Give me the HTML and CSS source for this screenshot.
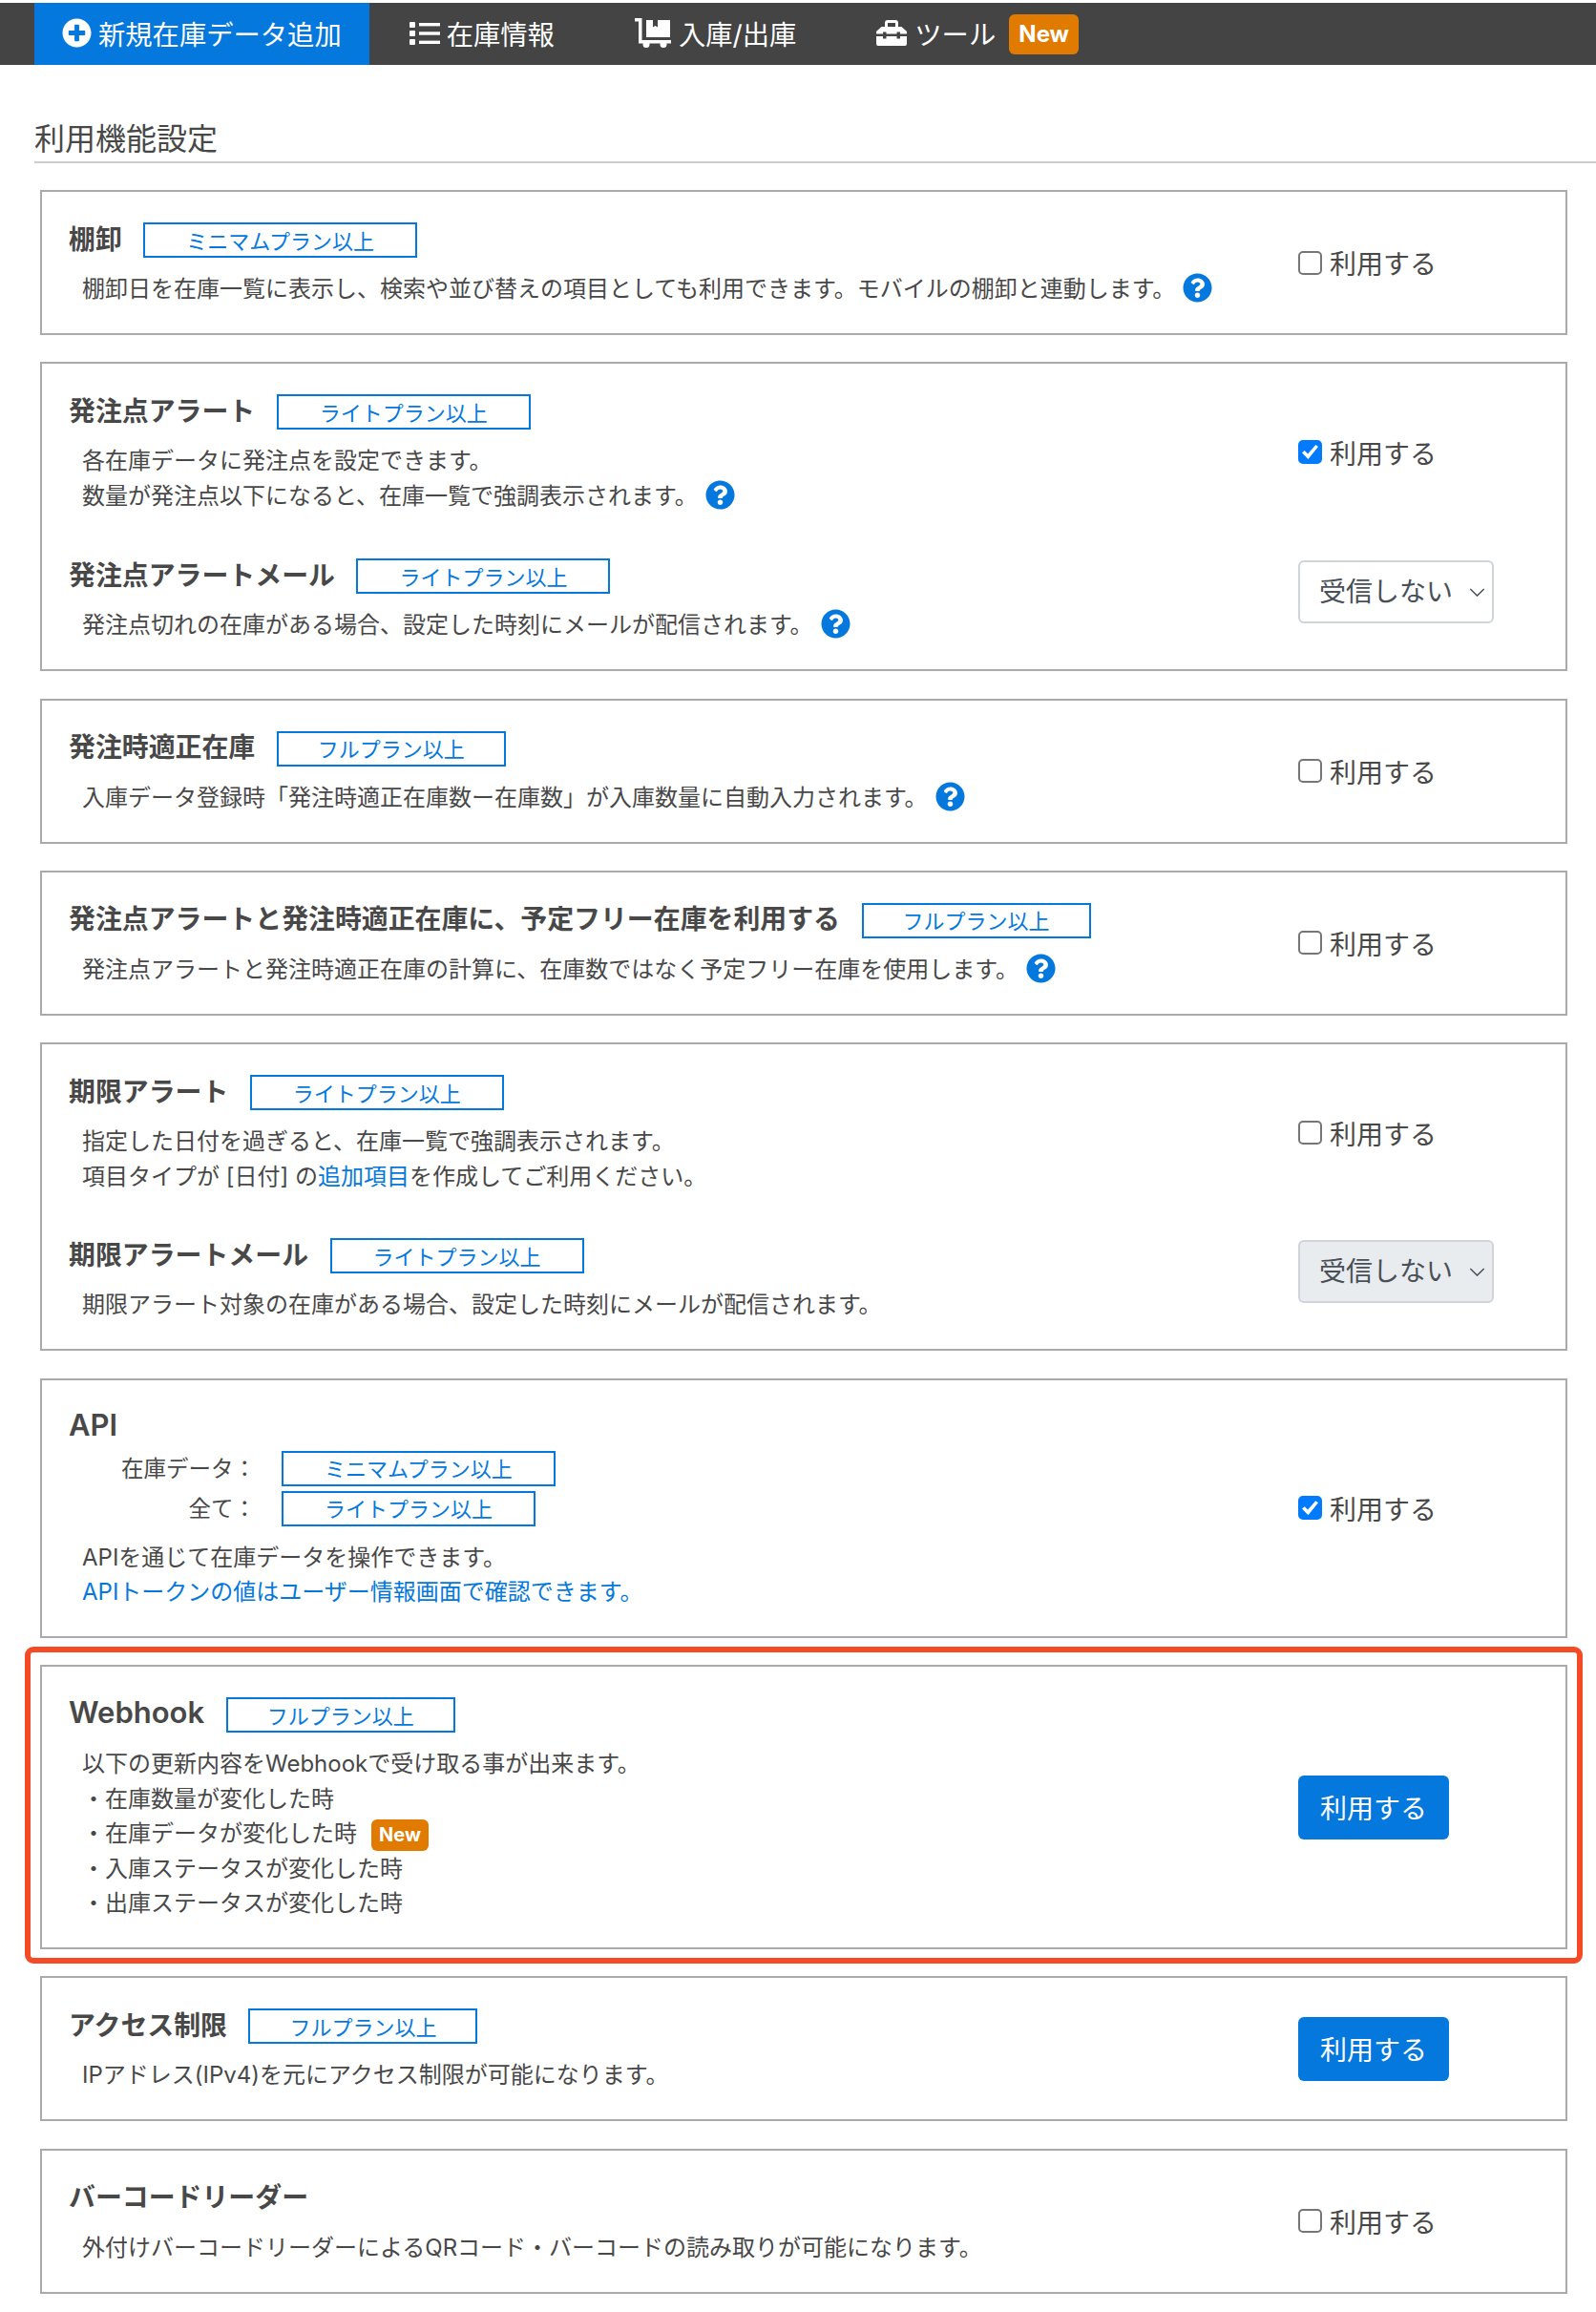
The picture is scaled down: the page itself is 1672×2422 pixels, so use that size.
FILE: index.html
```html
<!DOCTYPE html>
<html lang="ja">
<head>
<meta charset="utf-8">
<title>利用機能設定</title>
<link rel="stylesheet" href="styles.css">
</head>
<body>
<nav class="nav">
  <a class="tab tab--active">
    <svg class="ico ico--plus" viewBox="0 0 512 512"><path d="M256 8C119 8 8 119 8 256s111 248 248 248 248-111 248-248S393 8 256 8zm144 276c0 6.600-5.400 12-12 12h-92v92c0 6.600-5.400 12-12 12h-56c-6.600 0-12-5.400-12-12v-92h-92c-6.600 0-12-5.400-12-12v-56c0-6.600 5.400-12 12-12h92v-92c0-6.600 5.400-12 12-12h56c6.600 0 12 5.400 12 12v92h92c6.600 0 12 5.400 12 12v56z"/></svg>
    新規在庫データ追加
  </a>
  <a class="tab">
    <svg class="ico ico--list" viewBox="0 0 32 24"><rect x="0" y="0" width="6" height="6" rx="1"/><rect x="0" y="9" width="6" height="6" rx="1"/><rect x="0" y="18" width="6" height="6" rx="1"/><rect x="10" y="1" width="22" height="3.400"/><rect x="10" y="10.300" width="22" height="3.400"/><rect x="10" y="19.600" width="22" height="3.400"/></svg>
    在庫情報
  </a>
  <a class="tab">
    <svg class="ico ico--dolly" viewBox="0 0 38 31"><path d="M0 0h7.500v23h30.500v3.500H4V3.500H0z"/><path d="M12 2h7v7.500l2.500-1.500 2.500 1.500V2h13v18H12z"/><circle cx="12" cy="27.500" r="3.500"/><circle cx="30" cy="27.500" r="3.500"/></svg>
    入庫/出庫
  </a>
  <a class="tab">
    <svg class="ico ico--toolbox" viewBox="0 0 32 27"><path d="M9 7V3a3 3 0 0 1 3-3h8a3 3 0 0 1 3 3v4h3.500L32 12v2.500H25v-2h-3.500v2h-11v-2H7v2H0V12l5.500-5zM12 3v4h8V3z" fill-rule="evenodd"/><path d="M0 17h7v2.500h3.500V17h11v2.500H25V17h7v8a2 2 0 0 1-2 2H2a2 2 0 0 1-2-2z"/></svg>
    ツール
    <span class="new new--nav">New</span>
  </a>
</nav>

<main class="page">
  <h1 class="title">利用機能設定</h1>

  <section class="card">
    <div class="row">
      <div class="info">
        <div class="head"><h2 class="name">棚卸</h2><span class="plan">ミニマムプラン以上</span></div>
        <p class="desc">棚卸日を在庫一覧に表示し、検索や並び替えの項目としても利用できます。モバイルの棚卸と連動します。<svg class="help" viewBox="0 0 512 512"><path d="M504 256c0 136.997-111.043 248-248 248S8 392.997 8 256C8 119.083 119.043 8 256 8s248 111.083 248 248zM262.655 90c-54.497 0-89.255 22.957-116.549 63.758-3.536 5.286-2.353 12.415 2.715 16.258l34.699 26.310c5.205 3.947 12.621 3.008 16.665-2.122 17.864-22.658 30.113-35.797 57.303-35.797 20.429 0 45.698 13.148 45.698 32.958 0 14.976-12.363 22.667-32.534 33.976C247.128 238.528 216 254.941 216 296v4c0 6.627 5.373 12 12 12h56c6.627 0 12-5.373 12-12v-1.333c0-28.462 83.186-29.647 83.186-106.667 0-58.002-60.165-102-116.531-102zM256 338c-25.365 0-46 20.635-46 46 0 25.364 20.635 46 46 46s46-20.636 46-46c0-25.365-20.635-46-46-46z"/></svg></p>
      </div>
      <div class="side"><label class="use"><input class="box" type="checkbox">利用する</label></div>
    </div>
  </section>

  <section class="card">
    <div class="row">
      <div class="info">
        <div class="head"><h2 class="name">発注点アラート</h2><span class="plan">ライトプラン以上</span></div>
        <p class="desc">各在庫データに発注点を設定できます。<br>数量が発注点以下になると、在庫一覧で強調表示されます。<svg class="help" viewBox="0 0 512 512"><path d="M504 256c0 136.997-111.043 248-248 248S8 392.997 8 256C8 119.083 119.043 8 256 8s248 111.083 248 248zM262.655 90c-54.497 0-89.255 22.957-116.549 63.758-3.536 5.286-2.353 12.415 2.715 16.258l34.699 26.310c5.205 3.947 12.621 3.008 16.665-2.122 17.864-22.658 30.113-35.797 57.303-35.797 20.429 0 45.698 13.148 45.698 32.958 0 14.976-12.363 22.667-32.534 33.976C247.128 238.528 216 254.941 216 296v4c0 6.627 5.373 12 12 12h56c6.627 0 12-5.373 12-12v-1.333c0-28.462 83.186-29.647 83.186-106.667 0-58.002-60.165-102-116.531-102zM256 338c-25.365 0-46 20.635-46 46 0 25.364 20.635 46 46 46s46-20.636 46-46c0-25.365-20.635-46-46-46z"/></svg></p>
      </div>
      <div class="side"><label class="use"><input class="box" type="checkbox" checked>利用する</label></div>
    </div>
    <div class="row row--sub">
      <div class="info">
        <div class="head"><h2 class="name">発注点アラートメール</h2><span class="plan">ライトプラン以上</span></div>
        <p class="desc">発注点切れの在庫がある場合、設定した時刻にメールが配信されます。<svg class="help" viewBox="0 0 512 512"><path d="M504 256c0 136.997-111.043 248-248 248S8 392.997 8 256C8 119.083 119.043 8 256 8s248 111.083 248 248zM262.655 90c-54.497 0-89.255 22.957-116.549 63.758-3.536 5.286-2.353 12.415 2.715 16.258l34.699 26.310c5.205 3.947 12.621 3.008 16.665-2.122 17.864-22.658 30.113-35.797 57.303-35.797 20.429 0 45.698 13.148 45.698 32.958 0 14.976-12.363 22.667-32.534 33.976C247.128 238.528 216 254.941 216 296v4c0 6.627 5.373 12 12 12h56c6.627 0 12-5.373 12-12v-1.333c0-28.462 83.186-29.647 83.186-106.667 0-58.002-60.165-102-116.531-102zM256 338c-25.365 0-46 20.635-46 46 0 25.364 20.635 46 46 46s46-20.636 46-46c0-25.365-20.635-46-46-46z"/></svg></p>
      </div>
      <div class="side side--select">
        <div class="pick"><select class="select"><option>受信しない</option></select><svg class="chev" viewBox="0 0 18 10"><path d="M1 1l8 8 8-8"/></svg></div>
      </div>
    </div>
  </section>

  <section class="card">
    <div class="row">
      <div class="info">
        <div class="head"><h2 class="name">発注時適正在庫</h2><span class="plan plan--full">フルプラン以上</span></div>
        <p class="desc">入庫データ登録時「発注時適正在庫数ー在庫数」が入庫数量に自動入力されます。<svg class="help" viewBox="0 0 512 512"><path d="M504 256c0 136.997-111.043 248-248 248S8 392.997 8 256C8 119.083 119.043 8 256 8s248 111.083 248 248zM262.655 90c-54.497 0-89.255 22.957-116.549 63.758-3.536 5.286-2.353 12.415 2.715 16.258l34.699 26.310c5.205 3.947 12.621 3.008 16.665-2.122 17.864-22.658 30.113-35.797 57.303-35.797 20.429 0 45.698 13.148 45.698 32.958 0 14.976-12.363 22.667-32.534 33.976C247.128 238.528 216 254.941 216 296v4c0 6.627 5.373 12 12 12h56c6.627 0 12-5.373 12-12v-1.333c0-28.462 83.186-29.647 83.186-106.667 0-58.002-60.165-102-116.531-102zM256 338c-25.365 0-46 20.635-46 46 0 25.364 20.635 46 46 46s46-20.636 46-46c0-25.365-20.635-46-46-46z"/></svg></p>
      </div>
      <div class="side"><label class="use"><input class="box" type="checkbox">利用する</label></div>
    </div>
  </section>

  <section class="card">
    <div class="row">
      <div class="info">
        <div class="head"><h2 class="name">発注点アラートと発注時適正在庫に、予定フリー在庫を利用する</h2><span class="plan plan--full">フルプラン以上</span></div>
        <p class="desc">発注点アラートと発注時適正在庫の計算に、在庫数ではなく予定フリー在庫を使用します。<svg class="help" viewBox="0 0 512 512"><path d="M504 256c0 136.997-111.043 248-248 248S8 392.997 8 256C8 119.083 119.043 8 256 8s248 111.083 248 248zM262.655 90c-54.497 0-89.255 22.957-116.549 63.758-3.536 5.286-2.353 12.415 2.715 16.258l34.699 26.310c5.205 3.947 12.621 3.008 16.665-2.122 17.864-22.658 30.113-35.797 57.303-35.797 20.429 0 45.698 13.148 45.698 32.958 0 14.976-12.363 22.667-32.534 33.976C247.128 238.528 216 254.941 216 296v4c0 6.627 5.373 12 12 12h56c6.627 0 12-5.373 12-12v-1.333c0-28.462 83.186-29.647 83.186-106.667 0-58.002-60.165-102-116.531-102zM256 338c-25.365 0-46 20.635-46 46 0 25.364 20.635 46 46 46s46-20.636 46-46c0-25.365-20.635-46-46-46z"/></svg></p>
      </div>
      <div class="side"><label class="use"><input class="box" type="checkbox">利用する</label></div>
    </div>
  </section>

  <section class="card">
    <div class="row">
      <div class="info">
        <div class="head"><h2 class="name">期限アラート</h2><span class="plan">ライトプラン以上</span></div>
        <p class="desc">指定した日付を過ぎると、在庫一覧で強調表示されます。<br>項目タイプが [日付] の<a class="link">追加項目</a>を作成してご利用ください。</p>
      </div>
      <div class="side"><label class="use"><input class="box" type="checkbox">利用する</label></div>
    </div>
    <div class="row row--sub row--tight">
      <div class="info">
        <div class="head"><h2 class="name">期限アラートメール</h2><span class="plan">ライトプラン以上</span></div>
        <p class="desc">期限アラート対象の在庫がある場合、設定した時刻にメールが配信されます。</p>
      </div>
      <div class="side side--select">
        <div class="pick"><select class="select" disabled><option>受信しない</option></select><svg class="chev" viewBox="0 0 18 10"><path d="M1 1l8 8 8-8"/></svg></div>
      </div>
    </div>
  </section>

  <section class="card">
    <div class="row">
      <div class="info info--api">
        <h2 class="name name--latin name--api">API</h2>
        <div class="scopes">
          <span class="scope-label">在庫データ：</span><span class="plan">ミニマムプラン以上</span>
          <span class="scope-label">全て：</span><span class="plan">ライトプラン以上</span>
        </div>
        <p class="desc">APIを通じて在庫データを操作できます。<br><a class="link">APIトークンの値はユーザー情報画面で確認できます。</a></p>
      </div>
      <div class="side"><label class="use"><input class="box" type="checkbox" checked>利用する</label></div>
    </div>
  </section>

  <section class="card card--flagged">
    <div class="row">
      <div class="info">
        <div class="head"><h2 class="name name--latin">Webhook</h2><span class="plan plan--full">フルプラン以上</span></div>
        <p class="desc">以下の更新内容をWebhookで受け取る事が出来ます。<br>・在庫数量が変化した時<br>・在庫データが変化した時<span class="new new--inline">New</span><br>・入庫ステータスが変化した時<br>・出庫ステータスが変化した時</p>
      </div>
      <div class="side"><button class="btn" type="button">利用する</button></div>
    </div>
  </section>

  <section class="card">
    <div class="row">
      <div class="info">
        <div class="head"><h2 class="name">アクセス制限</h2><span class="plan plan--full">フルプラン以上</span></div>
        <p class="desc">IPアドレス(IPv4)を元にアクセス制限が可能になります。</p>
      </div>
      <div class="side"><button class="btn" type="button">利用する</button></div>
    </div>
  </section>

  <section class="card">
    <div class="row">
      <div class="info">
        <div class="head"><h2 class="name">バーコードリーダー</h2></div>
        <p class="desc">外付けバーコードリーダーによるQRコード・バーコードの読み取りが可能になります。</p>
      </div>
      <div class="side"><label class="use"><input class="box" type="checkbox">利用する</label></div>
    </div>
  </section>
</main>
</body>
</html>
```

FILE: styles.css
```css
* { box-sizing: border-box; }

html, body { margin: 0; background: #fff; }

body {
  padding-top: 3px;
  color: #484848;
  font-family: Inter, "Noto Sans CJK JP", sans-serif;
  font-size: 24px;
}

/* top navigation */
.nav {
  display: flex;
  align-items: stretch;
  height: 65px;
  padding-left: 36px;
  background: #444;
  color: #fff;
}

.tab {
  display: flex;
  align-items: center;
  padding: 0 42px 2px;
  font-size: 28.300px;
  white-space: nowrap;
}

.tab--active {
  padding: 0 29px 2px;
  background: #0478dc;
}

.ico { display: block; fill: #fff; margin-right: 7px; }
.ico--plus { width: 31px; height: 31px; }
.ico--list { width: 32px; height: 24px; }
.ico--dolly { width: 38px; height: 31px; margin-right: 8px; }
.ico--toolbox { width: 32px; height: 27px; margin-right: 8px; }

.new {
  display: inline-flex;
  align-items: center;
  justify-content: center;
  background: #e07b00;
  color: #fff;
  font-weight: 700;
  border-radius: 6px;
}

.new--nav {
  width: 73px;
  height: 42px;
  margin: 2px 0 0 14px;
  font-size: 24px;
}

.new--inline {
  width: 60px;
  height: 33px;
  margin-left: 15px;
  font-size: 20px;
  vertical-align: middle;
}

/* page */
.page { padding: 51px 0 0 36px; }

.title {
  height: 52px;
  margin: 0 0 28px;
  border-bottom: 2px solid #ccc;
  font-size: 32px;
  font-weight: 400;
  line-height: 54px;
}

.card {
  width: 1600px;
  margin: 0 0 28.400px 6px;
  border: 2px solid #aaa;
}

.card--flagged { position: relative; }

.card--flagged::after {
  content: "";
  position: absolute;
  inset: -21px -18px -17px -18px;
  border: 6px solid #f44a26;
  border-radius: 9px;
  pointer-events: none;
}

.row {
  display: flex;
  align-items: center;
}

.info {
  flex: 1;
  min-width: 0;
  padding: 32px 0 27.600px 28px;
}

.row--sub .info { padding-top: 19.400px; }

.row--tight .info { padding-top: 18.400px; }

.info--api { padding-top: 29px; }

.side {
  flex: none;
  width: 280px;
}

.side--select { padding-bottom: 27px; }

.head {
  display: flex;
  align-items: center;
  gap: 22.500px;
  height: 37px;
  margin-bottom: 15px;
}

.name {
  margin: 0 0 6px;
  font-size: 27.900px;
  font-weight: 700;
  white-space: nowrap;
}

.name--latin {
  font-size: 31px;
  font-weight: 600;
}

.name--api {
  margin-bottom: 10px;
  line-height: 35px;
}

.plan {
  display: inline-flex;
  align-items: center;
  justify-content: center;
  height: 37px;
  padding: 0 43px 2px;
  border: 2px solid #0478dc;
  color: #0478dc;
  font-size: 22px;
  white-space: nowrap;
}

.plan--full { padding: 0 41px 2px; }

.scopes {
  display: grid;
  grid-template-columns: 196px max-content;
  column-gap: 27px;
  row-gap: 5px;
  align-items: center;
  justify-items: start;
  margin-bottom: 15px;
}

.scope-label {
  justify-self: end;
  padding-bottom: 3px;
  font-size: 23.500px;
}

.desc {
  margin: 0;
  padding-left: 14px;
  font-size: 24px;
  line-height: 36.400px;
  white-space: nowrap;
}

.link { color: #0478dc; }

.help {
  width: 31px;
  height: 31px;
  margin-left: 8px;
  vertical-align: -6px;
  fill: #0478dc;
}

/* controls */
.use {
  display: flex;
  align-items: center;
  gap: 8px;
  font-size: 28px;
}

.box {
  appearance: none;
  display: grid;
  place-items: center;
  flex: none;
  width: 25px;
  height: 25px;
  margin: 0;
  border: 2px solid #767676;
  border-radius: 5px;
  background: #fff;
}

.box:checked {
  border-color: #007bff;
  background: #007bff;
}

.box:checked::after {
  content: "";
  width: 17px;
  height: 15px;
  background: #fff;
  clip-path: polygon(0 55%, 16% 40%, 36% 62%, 84% 0, 100% 13%, 38% 100%);
}

.pick {
  position: relative;
  width: 205px;
}

.select {
  appearance: none;
  display: block;
  width: 100%;
  height: 66px;
  padding: 0 0 0 20px;
  border: 2px solid #ced4da;
  border-radius: 6px;
  background: #fff;
  color: #495057;
  font: inherit;
  font-size: 28px;
  opacity: 1;
}

.select:disabled { background: #e9ecef; }

.chev {
  position: absolute;
  top: 29px;
  right: 9px;
  width: 17px;
  height: 9px;
  fill: none;
  stroke: #495057;
  stroke-width: 1.600;
}

.btn {
  display: block;
  width: 158px;
  height: 67px;
  padding: 0;
  border: 0;
  border-radius: 6px;
  background: #0478dc;
  color: #fff;
  font: inherit;
  font-size: 28px;
}
```
